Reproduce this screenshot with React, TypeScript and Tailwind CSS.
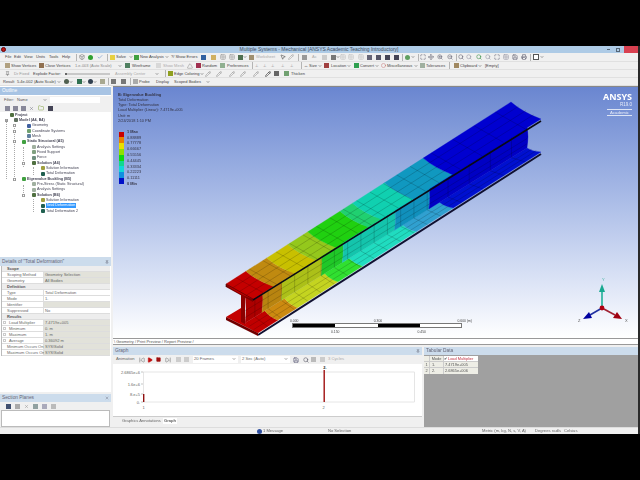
import { ReactNode } from "react";
import { ChevronDown, Check, Play, Square, SkipBack, SkipForward, Search, ZoomIn, ZoomOut, Move, Pencil, MousePointer2, Maximize, Printer, Save, Grid2x2, X, Pin, Triangle, Circle, Box, Folder } from "lucide-react";

type Pt = [number, number];
type Band = [number, number, string];

function mix(a: Pt, b: Pt, t: number): Pt {
    return [a[0] + (b[0] - a[0]) * t, a[1] + (b[1] - a[1]) * t];
}

function p(v: Pt) {
    return v[0].toFixed(1) + " " + v[1].toFixed(1);
}

function Surface({ a0, a1, b0, b1, bands, rows, bulge = 0 }: { a0: Pt; a1: Pt; b0: Pt; b1: Pt; bands: Band[]; rows: number[]; bulge?: number }) {
    const cross: number[] = [];
    for (let t = 0.035; t < 0.69; t += 0.047) cross.push(t);
    for (let t = 0.72; t < 1; t += 0.075) cross.push(t);
    const edge = (t: number) => {
        const u = mix(a0, a1, t);
        const v = mix(b0, b1, t);
        const m = mix(u, v, 0.5);
        return [u, [m[0] - bulge, m[1] + bulge * 0.63] as Pt, v];
    };
    return (
        <g>
            {bands.map(([from, to, color]) => {
                const e = edge(from);
                const f = edge(to);
                const d = "M" + p(e[0]) + " Q" + p(e[1]) + " " + p(e[2]) + " L" + p(f[2]) + " Q" + p(f[1]) + " " + p(f[0]) + " Z";
                return <path key={from} d={d} fill={color} stroke={color} strokeWidth="0.3" />;
            })}
            {cross.map((t) => {
                const u = mix(a0, a1, t);
                const v = mix(b0, b1, t);
                return <line key={t} x1={u[0]} y1={u[1]} x2={v[0]} y2={v[1]} stroke="#000" strokeOpacity="0.42" strokeWidth="0.4" />;
            })}
            {rows.map((f) => {
                const u = mix(a0, b0, f);
                const v = mix(a1, b1, f);
                return <line key={f} x1={u[0]} y1={u[1]} x2={v[0]} y2={v[1]} stroke="#000" strokeOpacity="0.42" strokeWidth="0.4" />;
            })}
        </g>
    );
}

function Beam() {
    return (
        <svg className="absolute left-0 top-0 w-[525px] h-[252px]" viewBox="113 86 525 252">
            <polygon points="226,316 241,307 245,322 258,332" fill="#c40000" />
            <Surface
                a0={[245, 322]} a1={[527, 147]} b0={[258, 332]} b1={[541, 151]} rows={[0.33, 0.66]} bulge={2}
                bands={[[0, 0.07, "#c00000"], [0.07, 0.14, "#cc8a10"], [0.14, 0.283, "#c4d420"], [0.283, 0.37, "#30e030"], [0.37, 0.56, "#20dcc0"], [0.56, 0.69, "#30a0d0"], [0.69, 1, "#0010d0"]]}
            />
            <line x1="258" y1="334" x2="541" y2="153" stroke="#101030" strokeWidth="2" />
            <Surface
                a0={[245, 295]} a1={[527, 126]} b0={[245, 322]} b1={[527, 147]} rows={[0.55, 0.8]} bulge={-2}
                bands={[[0, 0.06, "#ac0000"], [0.06, 0.128, "#b88410"], [0.128, 0.27, "#acc018"], [0.27, 0.345, "#20c828"], [0.345, 0.53, "#14c4ac"], [0.53, 0.652, "#1090bc"], [0.652, 1, "#0000c4"]]}
            />
            <polygon points="226,283 253,298 253,301 226,286" fill="#7c0000" />
            <polygon points="241,293 245,296 245,323 241,321" fill="#8c0000" />
            <polygon points="226,316 258,332 258,335 226,319" fill="#700000" />
            <line x1="226" y1="283" x2="226" y2="286" stroke="#300" strokeWidth="0.6" />
            <Surface
                a0={[226, 283]} a1={[511, 101]} b0={[253, 298]} b1={[541, 118]} rows={[0.25, 0.5, 0.75]} bulge={3}
                bands={[[0, 0.07, "#c40000"], [0.07, 0.143, "#c08a10"], [0.143, 0.217, "#c8c000"], [0.217, 0.287, "#94c81c"], [0.287, 0.4, "#20d010"], [0.4, 0.444, "#20d070"], [0.444, 0.556, "#10d0b0"], [0.556, 0.692, "#1098c0"], [0.692, 1, "#0000d0"]]}
            />
            <line x1="253" y1="299" x2="541" y2="120" stroke="#0a0a14" strokeWidth="1.6" />
            <line x1="226" y1="283" x2="253" y2="298" stroke="#500" strokeWidth="0.7" />
        </svg>
    );
}

function Triad() {
    return (
        <svg className="absolute left-[460px] top-[185px] w-[60px] h-[60px]" viewBox="573 271 60 60">
            <line x1="602" y1="307" x2="602" y2="290" stroke="#20b098" strokeWidth="1.6" />
            <polygon points="602,283 599,291 605,291" fill="#18a890" />
            <line x1="602" y1="307" x2="590" y2="314" stroke="#2030a0" strokeWidth="1.6" />
            <polygon points="583,318 592,317 589,311" fill="#0000a0" />
            <line x1="602" y1="307" x2="615" y2="314" stroke="#a02030" strokeWidth="1.6" />
            <polygon points="622,318 617,311 613,317" fill="#a00010" />
            <circle cx="602" cy="307" r="2.4" fill="#b00010" />
            <text x="602" y="280" fontSize="4" fill="#40b0a0" fontFamily="Liberation Sans">Y</text>
            <text x="578" y="321" fontSize="4" fill="#555" fontFamily="Liberation Sans">Z</text>
            <text x="625" y="321" fontSize="4" fill="#555" fontFamily="Liberation Sans">X</text>
        </svg>
    );
}

function Sq({ c, className = "" }: { c: string; className?: string }) {
    return <span className={"inline-block w-[5px] h-[5px] shrink-0 " + c + " " + className}></span>;
}

function Arrow({ className = "" }: { className?: string }) {
    return <ChevronDown size={4} strokeWidth={3} className={"shrink-0 text-[#444] " + className} />;
}

function Sep({ className = "" }: { className?: string }) {
    return <span className={"w-px h-[7px] bg-[#b4b4b4] shrink-0 " + className}></span>;
}

function T({ children, className = "" }: { children: ReactNode; className?: string }) {
    return <span className={"whitespace-nowrap shrink-0 " + className}>{children}</span>;
}

function Row({ children, className = "" }: { children: ReactNode; className?: string }) {
    return <div className={"flex items-center h-[8px] bg-[#f0f0f0] border-b border-[#e0e0e0] text-[4px] text-[#444] " + className}>{children}</div>;
}

function MenuRow() {
    return (
        <Row className="h-[9px]">
            <T className="ml-[5px] w-[7px]">File</T>
            <T className="ml-[2px] w-[8px]">Edit</T>
            <T className="ml-[2px] w-[9px]">View</T>
            <T className="ml-[3px] w-[10px]">Units</T>
            <T className="ml-[3px] w-[10px]">Tools</T>
            <T className="ml-[3px] w-[9px]">Help</T>
            <Sep className="ml-[5px]" />
            <Box size={6} className="ml-[2px] shrink-0 text-[#666]" />
            <Sq c="bg-[#30a030] rounded-full" className="ml-[3px]" />
            <Check size={6} className="ml-[4px] shrink-0 text-[#5080c0]" />
            <Sep className="ml-[4px]" />
            <Sq c="bg-[#e8d040]" className="ml-[2px]" />
            <T className="ml-[1px] w-[9px]">Solve</T>
            <Arrow className="ml-[4px]" />
            <Sq c="bg-[#40a040]" className="ml-[1px]" />
            <T className="ml-[1px] w-[24px]">New Analysis</T>
            <Arrow className="ml-[1px]" />
            <T className="ml-[2px] w-[27px]">?/ Show Errors</T>
            <Sq c="bg-[#3060a0]" className="ml-[3px]" />
            <Sq c="bg-[#d0b060]" className="ml-[5px]" />
            <Grid2x2 size={6} className="ml-[4px] shrink-0 text-[#888]" />
            <Grid2x2 size={6} className="ml-[3px] shrink-0 text-[#888]" />
            <Sq c="bg-[#507050]" className="ml-[3px]" />
            <Arrow />
            <Sq c="bg-[#a09070]" className="ml-[2px]" />
            <T className="ml-[2px] w-[18px] text-[#aaa]">Worksheet</T>
            <MousePointer2 size={6} className="ml-[6px] shrink-0 text-[#333]" />
            <Pencil size={6} className="ml-[2px] shrink-0 text-[#999]" />
            <Sep className="ml-[4px]" />
            <Sq c="bg-[#999]" className="ml-[3px]" />
            <T className="ml-[5px] w-[6px] text-[#aaa]">Ac</T>
            <Sq c="bg-[#ccc]" className="ml-[4px]" />
            <Sq c="bg-[#777]" className="ml-[4px]" />
            <Arrow />
            <Grid2x2 size={6} className="shrink-0 text-[#bbb]" />
            <Grid2x2 size={6} className="ml-[2px] shrink-0 text-[#bbb]" />
            <Grid2x2 size={6} className="ml-[4px] shrink-0 text-[#bbb]" />
            <Sq c="bg-[#667]" className="ml-[3px]" />
            <Sq c="bg-[#556]" className="ml-[4px]" />
            <Sq c="bg-[#445]" className="ml-[4px]" />
            <Sq c="bg-[#445]" className="ml-[4px]" />
            <Sep className="ml-[3px]" />
            <Sq c="bg-[#60a060] rounded-full" className="ml-[2px]" />
            <Arrow className="ml-[1px]" />
            <Sep className="ml-[3px]" />
            <Maximize size={6} className="ml-[1px] shrink-0 text-[#556]" />
            <Move size={6} className="ml-[2px] shrink-0 text-[#556]" />
            <ZoomIn size={6} className="ml-[3px] shrink-0 text-[#556]" />
            <ZoomOut size={6} className="ml-[4px] shrink-0 text-[#556]" />
            <Sep className="ml-[3px]" />
            <Search size={6} className="ml-[1px] shrink-0 text-[#556]" />
            <Search size={6} className="ml-[2px] shrink-0 text-[#889]" />
            <Search size={6} className="ml-[4px] shrink-0 text-[#208030]" />
            <Search size={6} className="ml-[3px] shrink-0 text-[#889]" />
            <Maximize size={6} className="ml-[3px] shrink-0 text-[#556]" />
            <Grid2x2 size={6} className="ml-[3px] shrink-0 text-[#889]" />
            <Save size={6} className="ml-[3px] shrink-0 text-[#556]" />
            <Printer size={6} className="ml-[3px] shrink-0 text-[#556]" />
            <Sep className="ml-[3px]" />
            <span className="ml-[2px] w-[6px] h-[6px] border border-[#555] bg-white shrink-0"></span>
            <Arrow className="ml-[1px]" />
        </Row>
    );
}

function ViewRow() {
    return (
        <Row>
            <Sq c="bg-[#b0a080]" className="ml-[5px]" />
            <T className="ml-[1px] w-[19px]">Show Vertices</T>
            <Sq c="bg-[#907050]" className="ml-[9px]" />
            <T className="ml-[1px] w-[21px]">Close Vertices</T>
            <T className="ml-[9px] w-[35px] text-[#888]">1.e-003 (Auto Scale)</T>
            <Arrow className="ml-[8px]" />
            <Sq c="bg-[#508060]" className="ml-[3px]" />
            <T className="ml-[2px] w-[22px]">Wireframe</T>
            <Sq c="bg-[#d8d8d8]" className="ml-[2px]" />
            <T className="ml-[2px] w-[19px] text-[#aaa]">Show Mesh</T>
            <Triangle size={6} className="ml-[5px] shrink-0 text-[#888]" />
            <Sq c="bg-[#a03050]" className="ml-[3px]" />
            <T className="ml-[1px] w-[15px]">Random</T>
            <Sq c="bg-[#90b090]" className="ml-[3px]" />
            <T className="ml-[2px] w-[21px]">Preferences</T>
            <Sep className="ml-[4px]" />
            <T className="ml-[2px] w-[4px] text-[#888]">⊥</T>
            <T className="ml-[4px] w-[4px] text-[#888]">⊥</T>
            <T className="ml-[4px] w-[4px] text-[#888]">⊥</T>
            <T className="ml-[6px] w-[4px] text-[#888]">⊥</T>
            <T className="ml-[5px] w-[4px] text-[#888]">⊥</T>
            <Sep className="ml-[7px]" />
            <T className="ml-[2px] w-[14px]">↔ Size</T>
            <Arrow />
            <Sq c="bg-[#a04040]" className="ml-[2px]" />
            <T className="ml-[2px] w-[15px]">Location</T>
            <Arrow className="ml-[1px]" />
            <Sq c="bg-[#30a050]" className="ml-[3px]" />
            <T className="ml-[1px] w-[13px]">Convert</T>
            <Arrow className="ml-[2px]" />
            <Circle size={5} className="ml-[2px] shrink-0 text-[#c06060]" />
            <T className="ml-[1px] w-[25px]">Miscellaneous</T>
            <Arrow className="ml-[2px]" />
            <Sq c="bg-[#a0b0a0]" className="ml-[2px]" />
            <T className="ml-[1px] w-[19px]">Tolerances</T>
            <Sep className="ml-[4px]" />
            <Sq c="bg-[#a08860]" className="ml-[4px]" />
            <T className="ml-[1px] w-[17px]">Clipboard</T>
            <Arrow className="ml-[1px]" />
            <T className="ml-[3px] w-[14px]">[Empty]</T>
        </Row>
    );
}

function EdgeRow() {
    return (
        <Row>
            <Pin size={5} className="ml-[5px] shrink-0 text-[#555]" />
            <T className="ml-[4px] w-[14px] text-[#999]">Dr Fixed</T>
            <T className="ml-[5px] w-[25px]">Explode Factor:</T>
            <span className="ml-[7px] w-[45px] h-[2px] bg-[#c8c8c8] border-l-2 border-[#666] shrink-0"></span>
            <T className="ml-[5px] w-[28px] text-[#aaa]">Assembly Center</T>
            <Arrow className="ml-[12px]" />
            <Sep className="ml-[6px]" />
            <Sq c="bg-[#90a020]" className="ml-[2px]" />
            <T className="ml-[1px] w-[21px]">Edge Coloring</T>
            <Arrow className="ml-[5px]" />
            <Pencil size={6} className="ml-[1px] shrink-0 text-[#888]" />
            <Pencil size={6} className="ml-[5px] shrink-0 text-[#888]" />
            <Pencil size={6} className="ml-[7px] shrink-0 text-[#888]" />
            <Pencil size={6} className="ml-[5px] shrink-0 text-[#888]" />
            <Pencil size={6} className="ml-[7px] shrink-0 text-[#888]" />
            <Pencil size={6} className="ml-[6px] shrink-0 text-[#111]" />
            <Sq c="bg-[#666]" className="ml-[3px]" />
            <Sq c="bg-[#70a070]" className="ml-[5px]" />
            <T className="ml-[2px] w-[14px]">Thicken</T>
        </Row>
    );
}

function ResultRow() {
    return (
        <Row>
            <T className="ml-[3px] w-[10px]">Result</T>
            <T className="ml-[4px] w-[33px]">5.4e-002 (Auto Scale)</T>
            <Arrow className="ml-[7px]" />
            <Sq c="bg-[#506050] rounded-full" className="ml-[3px]" />
            <Arrow />
            <Sq c="bg-[#307050]" className="ml-[4px]" />
            <Arrow />
            <Sq c="bg-[#304050] rounded-full" className="ml-[2px]" />
            <Arrow />
            <Sq c="bg-[#a8a890]" className="ml-[3px]" />
            <Sep className="ml-[3px]" />
            <Sq c="bg-[#777]" className="ml-[2px]" />
            <Sq c="bg-[#777]" className="ml-[5px]" />
            <Sep className="ml-[4px]" />
            <Sq c="bg-[#aaa]" className="ml-[2px]" />
            <T className="ml-[1px] w-[10px]">Probe</T>
            <T className="ml-[7px] w-[12px]">Display</T>
            <T className="ml-[6px] w-[24px]">Scoped Bodies</T>
            <Arrow className="ml-[8px]" />
        </Row>
    );
}

function PanelHead({ title, dark = false, right, className = "" }: { title: string; dark?: boolean; right?: ReactNode; className?: string }) {
    return (
        <div className={"flex items-center justify-between h-[8px] px-[2px] text-[4.8px] " + (dark ? "bg-[#ccdcec] text-[#667]" : "bg-[#a8c4e4] text-white") + " " + className}>
            <T>{title}</T>
            {right}
        </div>
    );
}

const tree: { depth: string; name: string; color: string; bold?: boolean; sel?: boolean; box?: string }[] = [
    { depth: "pl-[10px]", name: "Project", color: "bg-[#507040]", bold: true },
    { depth: "pl-[14px]", name: "Model (A4, B4)", color: "bg-[#607060]", bold: true, box: "-ml-[9px] mr-[6px]" },
    { depth: "pl-[27px]", name: "Geometry", color: "bg-[#4060a0]", box: "-ml-[14px] mr-[11px]" },
    { depth: "pl-[27px]", name: "Coordinate Systems", color: "bg-[#70a070]", box: "-ml-[14px] mr-[11px]" },
    { depth: "pl-[27px]", name: "Mesh", color: "bg-[#6080a0]" },
    { depth: "pl-[22px]", name: "Static Structural (A5)", color: "bg-[#40a040]", bold: true, box: "-ml-[9px] mr-[6px]" },
    { depth: "pl-[32px]", name: "Analysis Settings", color: "bg-[#a0b0a0]" },
    { depth: "pl-[32px]", name: "Fixed Support", color: "bg-[#80a080]" },
    { depth: "pl-[32px]", name: "Force", color: "bg-[#709080]" },
    { depth: "pl-[32px]", name: "Solution (A6)", color: "bg-[#507040]", bold: true, box: "-ml-[10px] mr-[7px]" },
    { depth: "pl-[41px]", name: "Solution Information", color: "bg-[#a0a040]" },
    { depth: "pl-[41px]", name: "Total Deformation", color: "bg-[#206050]" },
    { depth: "pl-[22px]", name: "Eigenvalue Buckling (B5)", color: "bg-[#40a040]", bold: true, box: "-ml-[9px] mr-[6px]" },
    { depth: "pl-[32px]", name: "Pre-Stress (Static Structural)", color: "bg-[#a0b0a0]" },
    { depth: "pl-[32px]", name: "Analysis Settings", color: "bg-[#a0b0a0]" },
    { depth: "pl-[32px]", name: "Solution (B6)", color: "bg-[#507040]", bold: true, box: "-ml-[10px] mr-[7px]" },
    { depth: "pl-[41px]", name: "Solution Information", color: "bg-[#a0a040]" },
    { depth: "pl-[41px]", name: "Total Deformation", color: "bg-[#206050]", sel: true },
    { depth: "pl-[41px]", name: "Total Deformation 2", color: "bg-[#206050]" },
];

function Outline() {
    return (
        <div className="h-[169px] bg-white flex flex-col">
            <PanelHead title="Outline" className="mt-px h-[7px]" />
            <div className="flex items-center h-[8px] mt-px text-[4px] text-[#555] bg-[#f0f0f0]">
                <T className="ml-[4px] w-[8px]">Filter:</T>
                <T className="ml-[5px] w-[10px]">Name</T>
                <Arrow className="ml-[16px]" />
                <span className="ml-[3px] w-[50px] h-[6px] bg-white shrink-0"></span>
            </div>
            <div className="flex items-center h-[8px] pl-[5px] gap-[3px] text-[#667] bg-[#f0f0f0]">
                <Sq c="bg-[#889]" />
                <Sq c="bg-[#889]" />
                <Sq c="bg-[#889]" />
                <X size={5} />
                <Folder size={6} className="text-[#80a040] ml-[1px]" />
                <Sq c="bg-[#445]" className="ml-[1px]" />
            </div>
            <div className="relative flex flex-col mt-[0.5px] text-[3.7px] text-[#445]">
                <span className="absolute left-[6px] top-[6px] h-[60px] border-l-[0.5px] border-dotted border-[#aaa]"></span>
                <span className="absolute left-[14px] top-[11px] h-[57px] border-l-[0.5px] border-dotted border-[#aaa]"></span>
                <span className="absolute left-[23px] top-[34px] h-[20px] border-l-[0.5px] border-dotted border-[#aaa]"></span>
                <span className="absolute left-[33px] top-[54px] h-[8px] border-l-[0.5px] border-dotted border-[#aaa]"></span>
                <span className="absolute left-[23px] top-[72px] h-[12px] border-l-[0.5px] border-dotted border-[#aaa]"></span>
                <span className="absolute left-[33px] top-[86px] h-[13px] border-l-[0.5px] border-dotted border-[#aaa]"></span>
                {tree.map((r, i) => (
                    <div key={i} className={"flex items-center h-[5.33px] " + r.depth}>
                        {r.box && <span className={"w-[3px] h-[3px] border-[0.5px] border-[#999] bg-white shrink-0 " + r.box}></span>}
                        <span className={"w-[4px] h-[4px] rounded-[1px] shrink-0 " + r.color}></span>
                        <T className={"ml-[1px] leading-[5px] " + (r.bold ? "font-bold " : "") + (r.sel ? "bg-[#3399ff] text-white px-[0.5px]" : "")}>{r.name}</T>
                    </div>
                ))}
            </div>
        </div>
    );
}

const details: { k: string; v?: string; head?: boolean; shade?: boolean; check?: boolean }[] = [
    { k: "Scope", head: true },
    { k: "Scoping Method", v: "Geometry Selection", shade: true },
    { k: "Geometry", v: "All Bodies", shade: true },
    { k: "Definition", head: true },
    { k: "Type", v: "Total Deformation" },
    { k: "Mode", v: "1." },
    { k: "Identifier", v: "", shade: true },
    { k: "Suppressed", v: "No" },
    { k: "Results", head: true },
    { k: "Load Multiplier", v: "7.4719e+005", check: true, shade: true },
    { k: "Minimum", v: "0. m", check: true, shade: true },
    { k: "Maximum", v: "1. m", check: true, shade: true },
    { k: "Average", v: "0.36092 m", check: true, shade: true },
    { k: "Minimum Occurs On", v: "SYS\\Solid", shade: true },
    { k: "Maximum Occurs On", v: "SYS\\Solid", shade: true },
];

function Details() {
    return (
        <div className="h-[137px] bg-white flex flex-col">
            <PanelHead title={'Details of "Total Deformation"'} dark className="h-[9px] mt-[2px]" right={<Pin size={4} className="text-[#556]" />} />
            <div className="flex flex-col text-[4px] text-[#666] border-l border-[#bbb] mx-px">
                {details.map((r) =>
                    r.head ? (
                        <div key={r.k} className="flex items-center h-[6px] bg-[#ededed] font-bold pl-[5px] text-[#555] border-b border-[#ddd]">{r.k}</div>
                    ) : (
                        <div key={r.k} className="flex h-[6px] border-b border-[#ddd] leading-[5px]">
                            <div className={"w-[42px] flex items-center whitespace-nowrap border-r border-[#ddd] " + (r.check ? "pl-[1px]" : "pl-[5px]")}>
                                {r.check && <span className="w-[3px] h-[3px] border-[0.5px] border-[#ccc] mr-[3px] shrink-0"></span>}
                                {r.k}
                            </div>
                            <div className={"flex-1 pl-[1px] whitespace-nowrap " + (r.shade ? "bg-[#e2e2da]" : "bg-white")}>{r.v}</div>
                        </div>
                    )
                )}
            </div>
        </div>
    );
}

function SectionPlanes() {
    return (
        <div className="flex-1 bg-[#f0f0f0] flex flex-col">
            <PanelHead title="Section Planes" dark className="mt-[2px]" right={<X size={4} className="text-[#556]" />} />
            <div className="flex items-center h-[8px] pl-[6px] gap-[4px]">
                <Sq c="bg-[#405070]" />
                <Sq c="bg-[#aaa]" />
                <X size={5} className="text-[#888]" />
                <Sq c="bg-[#90a0a0]" />
                <Sq c="bg-[#aab]" />
                <Sq c="bg-[#bbb]" />
            </div>
            <div className="h-[17px] bg-white border border-[#bbb] mx-px"></div>
        </div>
    );
}

function Overlay() {
    const legend = ["bg-[#c80000]", "bg-[#e88000]", "bg-[#e8e000]", "bg-[#90e000]", "bg-[#10d810]", "bg-[#10d890]", "bg-[#10d8d8]", "bg-[#1090e0]", "bg-[#0010c8]"];
    const labels = ["1 Max", "0.88889", "0.77778", "0.66667", "0.55556", "0.44445", "0.33334", "0.22223", "0.11111", "0 Min"];
    return (
        <div className="absolute left-[5px] top-[4.5px] text-[3.9px] text-[#334] leading-[5.33px]">
            <div className="font-bold">B: Eigenvalue Buckling</div>
            <div>Total Deformation</div>
            <div>Type: Total Deformation</div>
            <div>Load Multiplier (Linear): 7.4719e+005</div>
            <div>Unit: m</div>
            <div>2/24/2018 1:10 PM</div>
            <div className="flex mt-[5.3px]">
                <div className="flex flex-col w-[5px] mt-[2.9px] ml-[1px] mr-[3px]">
                    {legend.map((c) => (
                        <span key={c} className={"h-[5.8px] " + c}></span>
                    ))}
                </div>
                <div className="flex flex-col">
                    {labels.map((l, i) => (
                        <div key={l} className={"h-[5.8px] leading-[5.8px] " + (i === 0 || i === 9 ? "font-bold" : "")}>{l}</div>
                    ))}
                </div>
            </div>
        </div>
    );
}

function ScaleBar() {
    return (
        <div className="absolute left-[179px] top-[231px] w-[190px] text-[3.4px] text-[#444]">
            <div className="flex justify-between w-[182px] h-[5px] leading-[6px] -ml-[2px]">
                <span>0.000</span>
                <span>0.300</span>
                <span>0.600 (m)</span>
            </div>
            <div className="flex w-[170px] h-[5px] border-[0.5px] border-[#777] bg-white">
                <span className="w-[42px] bg-black"></span>
                <span className="w-[43px]"></span>
                <span className="w-[42px] bg-black"></span>
            </div>
            <div className="flex w-[170px] pl-[39px] gap-[78px] h-[5px] leading-[8px]">
                <span>0.150</span>
                <span>0.450</span>
            </div>
        </div>
    );
}

function Logo() {
    return (
        <div className="absolute right-[6px] top-[5px] flex flex-col items-end text-white">
            <div className="font-['Open_Sans'] font-bold text-[9px] leading-[10px]">ANSYS</div>
            <div className="text-[4.5px] leading-[5px] text-[#e8ecf8]">R19.0</div>
            <div className="mt-[2px] w-[25px] text-center text-[4.3px] leading-[5px] border-y-[0.5px] border-[#dde4f4] text-[#e8ecf8]">Academic</div>
        </div>
    );
}

function Chart() {
    return (
        <svg className="w-full h-[52px] bg-white" viewBox="113 366 309 52">
            <rect x="143.5" y="374" width="271" height="30" fill="#fff" stroke="#ccc" strokeWidth="0.5" />
            <g fontSize="4" fill="#666" fontFamily="Liberation Sans" textAnchor="end">
                <text x="140" y="375.5">2.6865e+6</text>
                <text x="140" y="387.5">1.6e+6</text>
                <text x="140" y="397.5">8.e+5</text>
                <text x="140" y="405.5">0.</text>
            </g>
            <g stroke="#888" strokeWidth="0.5">
                <line x1="141" y1="374" x2="143" y2="374" />
                <line x1="141" y1="386" x2="143" y2="386" />
                <line x1="141" y1="396" x2="143" y2="396" />
                <line x1="141" y1="404" x2="143" y2="404" />
            </g>
            <rect x="143" y="396" width="1.4" height="8" fill="#901010" />
            <rect x="323.5" y="372" width="1.4" height="32" fill="#a01010" />
            <g fontSize="4" fill="#666" fontFamily="Liberation Sans" textAnchor="middle">
                <text x="143.5" y="411">1</text>
                <text x="323.5" y="411">2</text>
                <text x="325" y="371" fontWeight="bold" fill="#222">2.</text>
            </g>
        </svg>
    );
}

function GraphPanel() {
    return (
        <div className="w-[309px] flex flex-col">
            <PanelHead title="Graph" dark right={<Pin size={4} className="text-[#556]" />} />
            <div className="flex items-center h-[9px] bg-[#f0f0f0] text-[4.2px] text-[#666]">
                <T className="ml-[3px] w-[19px]">Animation</T>
                <SkipBack size={6} className="ml-[4px] shrink-0 text-[#666]" />
                <Play size={6} className="ml-[2px] shrink-0 text-[#c01010] fill-[#c01010]" />
                <Square size={5} className="ml-[3px] shrink-0 text-[#a01010] fill-[#a01010]" />
                <SkipForward size={6} className="ml-[4px] shrink-0 text-[#666]" />
                <Sq c="bg-[#ccc]" className="ml-[5px]" />
                <Sq c="bg-[#ccc]" className="ml-[3px]" />
                <div className="ml-[4px] w-[45px] flex justify-between items-center bg-white pl-[1px] pr-[2px] shrink-0">20 Frames<Arrow /></div>
                <div className="ml-[3px] w-[49px] flex justify-between items-center bg-white pl-[1px] pr-[2px] shrink-0">2 Sec (Auto)<Arrow /></div>
                <Save size={6} className="ml-[3px] shrink-0 text-[#446]" />
                <Search size={6} className="ml-[4px] shrink-0 text-[#445]" />
                <Sq c="bg-[#bbb]" className="ml-[2px]" />
                <Sq c="bg-[#ccc]" className="ml-[4px]" />
                <T className="ml-[3px] w-[14px] text-[#aaa]">3 Cycles</T>
            </div>
            <Chart />
            <div className="flex items-center h-[9px] bg-[#f0f0f0] text-[4.1px] text-[#666] pl-[9px] border-t border-[#ccc]">
                <T className="w-[38px]">Graphics Annotations</T>
                <T className="ml-[3px] px-[1px] bg-white font-bold">Graph</T>
            </div>
        </div>
    );
}

function TabularPanel() {
    return (
        <div className="flex-1 flex flex-col ml-[2px]">
            <PanelHead title="Tabular Data" dark />
            <div className="flex-1 bg-[#a0a0a0] pt-px">
                <div className="w-[54px] text-[3.9px] text-[#555] bg-[#eeeee6]">
                    <div className="flex h-[6px] leading-[6px] border-b border-[#ccc]">
                        <div className="w-[6px] border-r border-[#ccc]"></div>
                        <div className="w-[14px] text-center border-r border-[#ccc]">Mode</div>
                        <div className="flex-1 bg-white text-[#c03040] whitespace-nowrap"><span className="text-[#333] mr-[1px]">✔</span>Load Multiplier</div>
                    </div>
                    <div className="flex h-[6px] leading-[6px] border-b border-[#ccc]">
                        <div className="w-[6px] text-center border-r border-[#ccc]">1</div>
                        <div className="w-[14px] pl-[2px] border-r border-[#ccc]">1.</div>
                        <div className="flex-1 pl-[1px]">7.4719e+005</div>
                    </div>
                    <div className="flex h-[6px] leading-[6px]">
                        <div className="w-[6px] text-center border-r border-[#ccc]">2</div>
                        <div className="w-[14px] pl-[2px] border-r border-[#ccc]">2.</div>
                        <div className="flex-1 pl-[1px]">2.6865e+006</div>
                    </div>
                </div>
            </div>
        </div>
    );
}

export default function App() {
    return (
        <div className="w-[640px] h-[480px] bg-black overflow-hidden font-['Liberation_Sans',sans-serif]">
            <div className="flex mt-[46px] h-[388px] blur-[0.3px]">
                <div className="w-[638px] flex flex-col bg-[#f0f0f0]">
                    <div className="relative flex items-center justify-center h-[7px] bg-[#aecbe6] text-[4.95px] text-[#3c4a5c]">
                        <span className="absolute left-[1px] top-[1px] w-[5px] h-[5px] rounded-full bg-[#c01818] border border-[#600]"></span>
                        <T>Multiple Systems - Mechanical [ANSYS Academic Teaching Introductory]</T>
                        <div className="absolute right-0 top-0 flex items-center h-[7px]">
                            <span className="w-[3px] h-px bg-[#567] mr-[6px]"></span>
                            <span className="w-[4px] h-[4px] border border-[#567] mr-[4px]"></span>
                            <span className="w-[14px] h-[7px] bg-[#d84050]"></span>
                        </div>
                    </div>
                    <MenuRow />
                    <ViewRow />
                    <EdgeRow />
                    <ResultRow />
                    <div className="flex flex-1 min-h-0">
                        <div className="w-[111px] flex flex-col">
                            <Outline />
                            <Details />
                            <SectionPlanes />
                        </div>
                        <div className="flex-1 flex flex-col ml-[2px]">
                            <div className="relative h-[252px] bg-linear-to-b from-[#6a86d0] to-white border-t border-[#888] overflow-hidden">
                                <Beam />
                                <Overlay />
                                <Logo />
                                <ScaleBar />
                                <Triad />
                            </div>
                            <div className="flex items-center h-[7px] bg-white border-y border-[#999] text-[4px] text-[#555]">
                                <T className="ml-[1px]">\ Geometry / Print Preview / Report Preview /</T>
                            </div>
                            <div className="flex h-[80px] mt-[2px]">
                                <GraphPanel />
                                <TabularPanel />
                            </div>
                        </div>
                    </div>
                    <div className="flex items-center h-[7px] bg-[#f0f0f0] border-t border-[#ddd] text-[4.1px] text-[#666]">
                        <Sq c="bg-[#3050a0] rounded-full" className="ml-[257px]" />
                        <T className="ml-[1px] w-[20px]">1 Message</T>
                        <T className="ml-[45px] w-[24px]">No Selection</T>
                        <T className="ml-[130px] w-[50px]">Metric (m, kg, N, s, V, A)</T>
                        <T className="ml-[3px] w-[14px]">Degrees</T>
                        <T className="ml-[3px] w-[9px]">rad/s</T>
                        <T className="ml-[3px]">Celsius</T>
                    </div>
                </div>
                <div className="w-[2px] bg-[#2a2a2a]"></div>
            </div>
        </div>
    );
}
